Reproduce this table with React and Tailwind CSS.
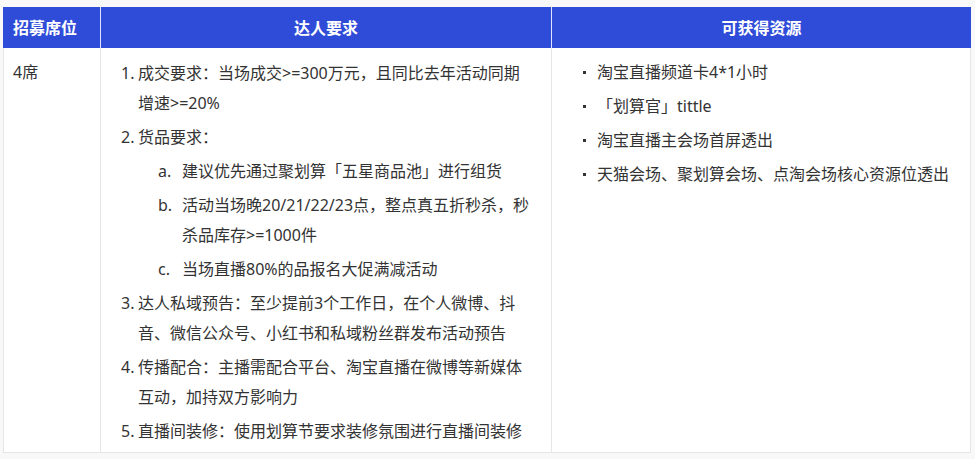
const zhFont = { fontFamily: '"Noto Sans", "Noto Sans CJK SC", sans-serif' }

const requirements = [
  { n: '1.', text: '成交要求：当场成交>=300万元，且同比去年活动同期增速>=20%' },
  {
    n: '2.',
    text: '货品要求：',
    sub: [
      { n: 'a.', text: '建议优先通过聚划算「五星商品池」进行组货' },
      { n: 'b.', text: '活动当场晚20/21/22/23点，整点真五折秒杀，秒杀品库存>=1000件' },
      { n: 'c.', text: '当场直播80%的品报名大促满减活动' },
    ],
  },
  { n: '3.', text: '达人私域预告：至少提前3个工作日，在个人微博、抖音、微信公众号、小红书和私域粉丝群发布活动预告' },
  { n: '4.', text: '传播配合：主播需配合平台、淘宝直播在微博等新媒体互动，加持双方影响力' },
  { n: '5.', text: '直播间装修：使用划算节要求装修氛围进行直播间装修' },
]

const resources = [
  '淘宝直播频道卡4*1小时',
  '「划算官」tittle',
  '淘宝直播主会场首屏透出',
  '天猫会场、聚划算会场、点淘会场核心资源位透出',
]

function Item({ n, children, markerClass }) {
  return (
    <div className="flex mb-[4px]">
      <span className={markerClass}>{n}</span>
      <span className="flex-1">{children}</span>
    </div>
  )
}

export default function App() {
  return (
    <div
      className="min-h-screen bg-[#f8f8f8] pt-[7px] pl-[3px] text-[16px] text-[#333] [text-spacing-trim:space-all]"
      style={zhFont}
    >
      <div className="w-[968px]">
        {/* 表头 */}
        <div className="flex h-[41px] bg-[#2f4cd9] text-white font-bold">
          <div className="w-[97px] pl-[10px] flex items-center">招募席位</div>
          <div className="w-[451px] border-l border-[#dfe4fa] flex items-center justify-center">达人要求</div>
          <div className="flex-1 border-l border-[#dfe4fa] flex items-center justify-center">可获得资源</div>
        </div>

        {/* 内容 */}
        <div className="flex bg-white border-l border-r border-b border-[#e6e6e6] leading-[30px]">
          <div className="w-[96px] pl-[9px] pt-[9px]">4席</div>
          <div className="w-[451px] border-l border-[#e6e6e6] pl-[16px] pr-[17px] pt-[10px] pb-[2px]">
            {requirements.map((r) => (
              <div key={r.n}>
                <Item n={r.n} markerClass="w-[21px] pl-[4px] shrink-0">
                  {r.text}
                </Item>
                {r.sub && (
                  <div className="pl-[21px]">
                    {r.sub.map((s) => (
                      <Item key={s.n} n={s.n} markerClass="w-[44px] pl-[20px] shrink-0">
                        {s.text}
                      </Item>
                    ))}
                  </div>
                )}
              </div>
            ))}
          </div>
          <div className="flex-1 border-l border-[#e6e6e6] pl-[31px] pt-[9px]">
            {resources.map((t) => (
              <div key={t} className="flex items-center mb-[4px]">
                <span className="w-[3px] h-[3px] bg-[#333] mr-[11px] shrink-0" />
                <span>{t}</span>
              </div>
            ))}
          </div>
        </div>
      </div>
    </div>
  )
}
